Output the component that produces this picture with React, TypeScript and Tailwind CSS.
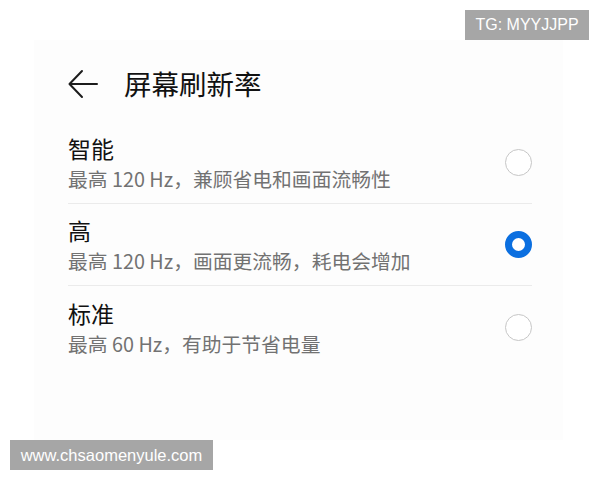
const cjk = "font-['Noto_Sans_CJK_SC','Noto_Sans',sans-serif]";
const latin = "font-['Liberation_Sans',Arial,sans-serif]";

const options = [
  { title: "智能", desc: "最高 120 Hz，兼顾省电和画面流畅性", checked: false },
  { title: "高", desc: "最高 120 Hz，画面更流畅，耗电会增加", checked: true },
  { title: "标准", desc: "最高 60 Hz，有助于节省电量", checked: false },
];

function BackArrow() {
  return (
    <svg width="30" height="30" viewBox="0 0 30 30" fill="none" stroke="#1c1c1c" strokeWidth="2" strokeLinecap="round" strokeLinejoin="round">
      <path d="M29 15H2" />
      <path d="M14 2L1.5 15L14 28" />
    </svg>
  );
}

function Radio({ checked }: { checked: boolean }) {
  if (checked) {
    return <div className="h-[27px] w-[27px] rounded-full border-[7px] border-[#0b6fe0] bg-white" />;
  }
  return <div className="h-[27px] w-[27px] rounded-full border-[1.5px] border-[#c6c6c6] bg-white" />;
}

export default function App() {
  return (
    <div className={`flex h-[480px] w-[600px] flex-col bg-white ${cjk}`}>
      <div className="flex h-[40px] justify-end pr-[11px] pt-[10px]">
        <div className={`flex h-[30px] w-[124px] items-center justify-center bg-[#a6a6a6] text-[16px] text-white ${latin}`}>
          TG: MYYJJPP
        </div>
      </div>

      <div className="ml-[34px] flex h-[400px] w-[529px] flex-col bg-[#fdfdfd] pl-[34px] pr-[31px]">
        <div className="mt-[29px] flex h-[30px] items-center gap-[26px]">
          <BackArrow />
          <span className="text-[27.5px] leading-none font-normal text-[#111111]">屏幕刷新率</span>
        </div>

        <div className="mt-[23px] flex flex-col">
          {options.map((o, i) => (
            <div
              key={o.title}
              className={`flex h-[82px] items-center justify-between ${i < options.length - 1 ? "border-b border-[#ebebeb]" : ""}`}
            >
              <div className="flex flex-col gap-[3px]">
                <span className="text-[23px] leading-[30px] font-normal text-[#111111]">{o.title}</span>
                <span className="text-[19.8px] leading-[26px] text-[#727272]">{o.desc}</span>
              </div>
              <Radio checked={o.checked} />
            </div>
          ))}
        </div>
      </div>

      <div className="pl-[10px]">
        <div className={`flex h-[30px] w-[203px] items-center justify-center bg-[#a6a6a6] text-[16.5px] text-white ${latin}`}>
          www.chsaomenyule.com
        </div>
      </div>
    </div>
  );
}
